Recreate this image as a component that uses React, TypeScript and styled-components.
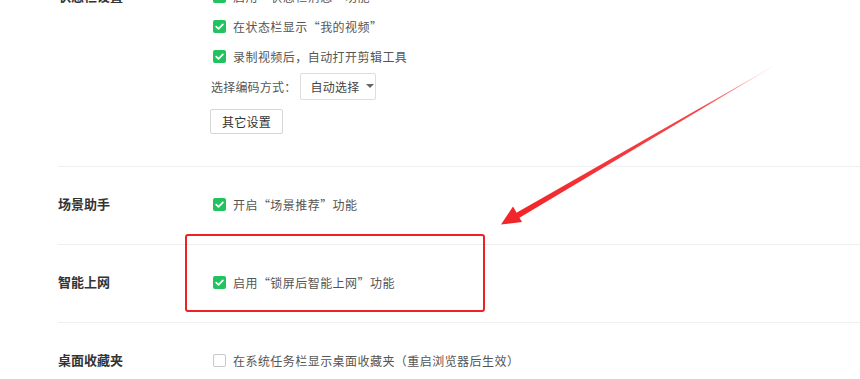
import styled, { createGlobalStyle } from 'styled-components';

const GlobalStyle = createGlobalStyle`
  html, body {
    margin: 0;
    padding: 0;
    background: #fff;
    overflow: hidden;
  }
  body {
    font-family: "Noto Sans CJK SC", "Liberation Sans", sans-serif;
  }
`;

interface SectionProps {
  $pb?: number;
}

const Check = ({ checked }: { checked: boolean }) => (
  <CheckBox $checked={checked}>
    {checked && (
      <svg width="13" height="13" viewBox="0 0 13 13">
        <polyline
          points="3.2,6.6 5.5,8.9 9.9,4.3"
          fill="none"
          stroke="#fff"
          strokeWidth="1.7"
          strokeLinecap="round"
          strokeLinejoin="round"
        />
      </svg>
    )}
  </CheckBox>
);

const Option = ({ text, checked = true }: { text: string; checked?: boolean }) => (
  <OptionRow>
    <Check checked={checked} />
    <OptionText>{text}</OptionText>
  </OptionRow>
);

const App = () => {
  return (
    <>
      <GlobalStyle />
      <Page>
        <Section $pb={32}>
          <Label>状态栏设置</Label>
          <Content>
            <Option text="启用“状态栏消息”功能" />
            <Option text="在状态栏显示“我的视频”" />
            <Option text="录制视频后，自动打开剪辑工具" />
            <OptionRow>
              <PlainText>选择编码方式：</PlainText>
              <Select>
                自动选择
                <Caret />
              </Select>
            </OptionRow>
            <Button>其它设置</Button>
          </Content>
        </Section>
        <Section>
          <Label>场景助手</Label>
          <Content>
            <Option text="开启“场景推荐”功能" />
          </Content>
        </Section>
        <Section>
          <Label>智能上网</Label>
          <Content>
            <Option text="启用“锁屏后智能上网”功能" />
          </Content>
        </Section>
        <Section>
          <Label>桌面收藏夹</Label>
          <Content>
            <Option checked={false} text="在系统任务栏显示桌面收藏夹（重启浏览器后生效）" />
          </Content>
        </Section>

        <Highlight />
        <Arrow width="860" height="379" viewBox="0 0 860 379">
          <defs>
            <linearGradient id="fade" x1="777" y1="64" x2="520" y2="213" gradientUnits="userSpaceOnUse">
              <stop offset="0" stopColor="#f2262a" stopOpacity="0.15" />
              <stop offset="0.3" stopColor="#f2262a" stopOpacity="0.85" />
              <stop offset="1" stopColor="#f2262a" />
            </linearGradient>
          </defs>
          <polygon points="777,64 519,218 516,213" fill="url(#fade)" />
          <polygon points="501,224.5 522,222 513,206.5" fill="#f2262a" />
        </Arrow>
      </Page>
    </>
  );
};

export default App;

const Page = styled.div`
  position: relative;
  margin-top: -41px;
  padding-left: 58px;
  width: 802px;
  height: 420px;
`;

const Section = styled.div<SectionProps>`
  display: flex;
  align-items: flex-start;
  padding: 22px 0 ${(p) => (p.$pb !== undefined ? p.$pb : 25)}px;
  border-bottom: 1px solid #efefef;
`;

const Label = styled.div`
  width: 155px;
  flex-shrink: 0;
  line-height: 30px;
  font-size: 13px;
  font-weight: 700;
  color: #333;
`;

const Content = styled.div`
  display: flex;
  flex-direction: column;
  align-items: flex-start;
`;

const OptionRow = styled.div`
  display: flex;
  align-items: center;
  height: 30px;
`;

const CheckBox = styled.span<{ $checked: boolean }>`
  display: inline-flex;
  width: 13px;
  height: 13px;
  box-sizing: border-box;
  border-radius: 2px;
  margin-right: 7px;
  background: ${(p) => (p.$checked ? '#22c35e' : '#fff')};
  border: ${(p) => (p.$checked ? 'none' : '1px solid #c8c8c8')};
`;

const OptionText = styled.span`
  font-size: 12px;
  letter-spacing: 0.45px;
  color: #555;
  white-space: nowrap;
`;

const PlainText = styled(OptionText)`
  margin-left: -2px;
  letter-spacing: 0.2px;
`;

const Select = styled.div`
  display: flex;
  align-items: center;
  box-sizing: border-box;
  height: 27px;
  width: 76px;
  margin-left: 4px;
  padding: 0 0 0 9px;
  border: 1px solid #dedede;
  border-radius: 2px;
  font-size: 12px;
  letter-spacing: 0.3px;
  color: #444;
  white-space: nowrap;
`;

const Caret = styled.span`
  width: 0;
  height: 0;
  margin-left: 6px;
  border-left: 4px solid transparent;
  border-right: 4px solid transparent;
  border-top: 4px solid #666;
`;

const Button = styled.div`
  margin-top: 8px;
  margin-left: -3px;
  box-sizing: border-box;
  width: 73px;
  height: 25px;
  display: flex;
  align-items: center;
  justify-content: center;
  border: 1px solid #d6d6d6;
  border-radius: 2px;
  font-size: 12px;
  letter-spacing: 0.3px;
  color: #333;
`;

const Highlight = styled.div`
  position: absolute;
  left: 185px;
  top: 275px;
  width: 300px;
  height: 78px;
  box-sizing: border-box;
  border: 2px solid #ee2222;
  border-radius: 3px;
`;

const Arrow = styled.svg`
  position: absolute;
  left: 0;
  top: 41px;
  pointer-events: none;
`;
